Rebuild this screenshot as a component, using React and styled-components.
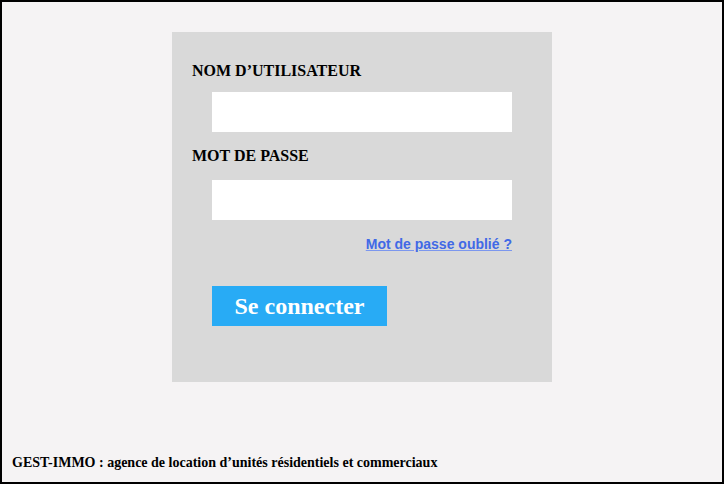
import React from "react";
import styled, { createGlobalStyle } from "styled-components";

const GlobalStyle = createGlobalStyle`
  html, body {
    margin: 0;
    padding: 0;
  }
  body {
    font-family: "Liberation Serif", "Times New Roman", serif;
  }
`;

const Frame = styled.div`
  box-sizing: border-box;
  width: 724px;
  height: 484px;
  border: 2px solid #000;
  background: #f5f3f4;
  display: flex;
  flex-direction: column;
  align-items: center;
  padding-top: 30px;
`;

const Card = styled.form`
  box-sizing: border-box;
  width: 380px;
  height: 350px;
  background: #d9d9d9;
  padding: 30px 40px 0 20px;
  display: flex;
  flex-direction: column;
`;

const Label = styled.label`
  font-weight: bold;
  font-size: 16px;
  line-height: 18px;
  color: #000;
  margin-top: ${(p) => p.$top || 0}px;
`;

const Input = styled.input`
  box-sizing: border-box;
  display: block;
  width: 300px;
  height: 40px;
  margin: ${(p) => p.$top}px 0 0 20px;
  border: none;
  background: #fff;
  outline: none;
  padding: 0 8px;
  font-size: 15px;
`;

const Forgot = styled.a`
  align-self: flex-end;
  margin-top: 16px;
  font-family: "Liberation Sans", Arial, sans-serif;
  font-weight: bold;
  font-size: 14px;
  line-height: 16px;
  color: #4169e6;
  text-decoration: underline;
  text-decoration-color: #7c97ee;
  cursor: pointer;
`;

const Submit = styled.button`
  width: 175px;
  height: 40px;
  margin: 34px 0 0 20px;
  border: none;
  background: #28abf5;
  color: #fff;
  font-family: "Liberation Serif", "Times New Roman", serif;
  font-weight: bold;
  font-size: 24px;
  padding: 0;
  cursor: pointer;
`;

const Footer = styled.footer`
  align-self: stretch;
  margin-top: auto;
  padding: 0 0 11px 10px;
  font-weight: bold;
  font-size: 14px;
  line-height: 16px;
  color: #000;
`;

const App = () => {
  return (
    <>
      <GlobalStyle />
      <Frame>
        <Card onSubmit={(e) => e.preventDefault()}>
          <Label htmlFor="user">NOM D’UTILISATEUR</Label>
          <Input id="user" type="text" $top={12} />
          <Label htmlFor="pass" $top={15}>MOT DE PASSE</Label>
          <Input id="pass" type="password" $top={15} />
          <Forgot>Mot de passe oublié ?</Forgot>
          <Submit type="submit">Se connecter</Submit>
        </Card>
        <Footer>
          GEST-IMMO : agence de location d’unités résidentiels et commerciaux
        </Footer>
      </Frame>
    </>
  );
};

export default App;
